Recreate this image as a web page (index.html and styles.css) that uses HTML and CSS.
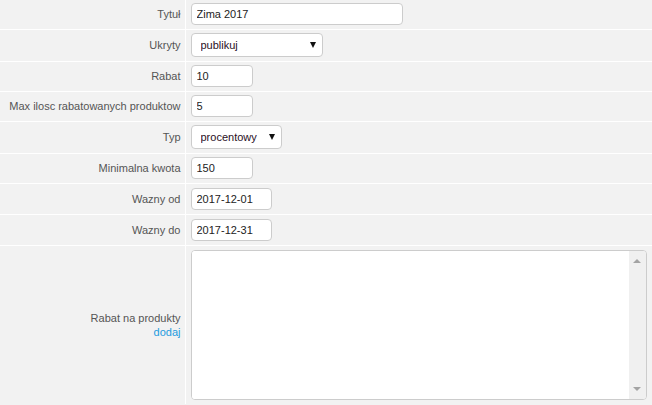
FILE: index.html
```html
<!DOCTYPE html>
<html lang="pl">
<head>
  <meta charset="UTF-8">
  <title>Rabat - edycja</title>
  <link rel="stylesheet" href="styles.css">
</head>
<body>
  <table class="form-table">
    <colgroup>
      <col class="col-label">
      <col>
    </colgroup>
    <tr>
      <td class="label">Tytuł</td>
      <td class="field"><input class="inp inp-wide" type="text" value="Zima 2017"></td>
    </tr>
    <tr>
      <td class="label">Ukryty</td>
      <td class="field">
        <span class="sel sel-ukryty">
          <select><option>publikuj</option><option>ukryj</option></select>
        </span>
      </td>
    </tr>
    <tr>
      <td class="label">Rabat</td>
      <td class="field"><input class="inp inp-short" type="text" value="10"></td>
    </tr>
    <tr>
      <td class="label">Max ilosc rabatowanych produktow</td>
      <td class="field"><input class="inp inp-short" type="text" value="5"></td>
    </tr>
    <tr>
      <td class="label">Typ</td>
      <td class="field">
        <span class="sel sel-typ">
          <select><option>procentowy</option><option>kwotowy</option></select>
        </span>
      </td>
    </tr>
    <tr>
      <td class="label">Minimalna kwota</td>
      <td class="field"><input class="inp inp-short" type="text" value="150"></td>
    </tr>
    <tr class="row-tall">
      <td class="label">Wazny od</td>
      <td class="field"><input class="inp inp-date" type="text" value="2017-12-01"></td>
    </tr>
    <tr class="row-tall">
      <td class="label">Wazny do</td>
      <td class="field"><input class="inp inp-date" type="text" value="2017-12-31"></td>
    </tr>
    <tr class="row-area">
      <td class="label">Rabat na produkty<br><a href="#" class="add-link">dodaj</a></td>
      <td class="field">
        <div class="area">
          <textarea></textarea>
          <div class="scrollbar">
            <span class="arrow arrow-up"></span>
            <span class="arrow arrow-down"></span>
          </div>
        </div>
      </td>
    </tr>
  </table>
</body>
</html>
```

FILE: styles.css
```css
body {
  margin: 0;
  background-color: #f2f2f2;
  font-family: 'Liberation Sans', Arial, sans-serif;
  font-size: 11px;
  color: #555;
}

.form-table {
  width: 652px;
  table-layout: fixed;
  border-collapse: collapse;
}

.col-label {
  width: 185px;
}

.form-table td {
  border-bottom: 1px solid #fff;
  padding: 3px 5px 4px 5px;
  vertical-align: middle;
}

.form-table tr:last-child td {
  border-bottom: 0;
}

.form-table .row-tall td {
  padding-top: 4px;
}

.form-table .row-area td {
  padding-top: 4px;
}

.label {
  text-align: right;
  white-space: nowrap;
  border-right: 1px solid #fff;
  padding-right: 4px !important;
  line-height: 14px;
}

.add-link {
  color: #1f9bde;
  text-decoration: none;
}

.inp {
  display: block;
  box-sizing: border-box;
  height: 22px;
  border: 1px solid #ccc;
  border-radius: 4px;
  background: #fff;
  padding: 0 5px;
  font-family: inherit;
  font-size: 11px;
  color: #222;
  outline: none;
}

.inp-wide  { width: 212px; }
.inp-short { width: 62px; }
.inp-date  { width: 81px; }

/* select z wlasna strzalka */
.sel {
  position: relative;
  display: block;
  box-sizing: border-box;
  height: 24px;
}

.sel select {
  appearance: none;
  -webkit-appearance: none;
  box-sizing: border-box;
  width: 100%;
  height: 24px;
  border: 1px solid #ccc;
  border-radius: 4px;
  background: #fff;
  padding: 0 18px 0 9px;
  font-family: inherit;
  font-size: 11px;
  color: #2a1025;
  outline: none;
}

.sel::after {
  content: "";
  position: absolute;
  top: 9px;
  right: 7px;
  border-left: 3px solid transparent;
  border-right: 3px solid transparent;
  border-top: 6px solid #111;
  pointer-events: none;
}

.sel-ukryty { width: 132px; }
.sel-typ    { width: 91px; }

.area {
  display: flex;
  box-sizing: border-box;
  width: 456px;
  height: 150px;
  border: 1px solid #ccc;
  border-radius: 4px;
  background: #fff;
  overflow: hidden;
}

.area textarea {
  flex: 1;
  border: 0;
  resize: none;
  outline: none;
  font-family: inherit;
  font-size: 11px;
  overflow: hidden;
}

.scrollbar {
  width: 17px;
  background: #f0f0f0;
  display: flex;
  flex-direction: column;
  justify-content: space-between;
  align-items: center;
  padding: 8px 0;
}

.arrow {
  width: 0;
  height: 0;
  border-left: 4px solid transparent;
  border-right: 4px solid transparent;
}

.arrow-up   { border-bottom: 4px solid #a3a3a3; }
.arrow-down { border-top: 4px solid #a3a3a3; }
```
